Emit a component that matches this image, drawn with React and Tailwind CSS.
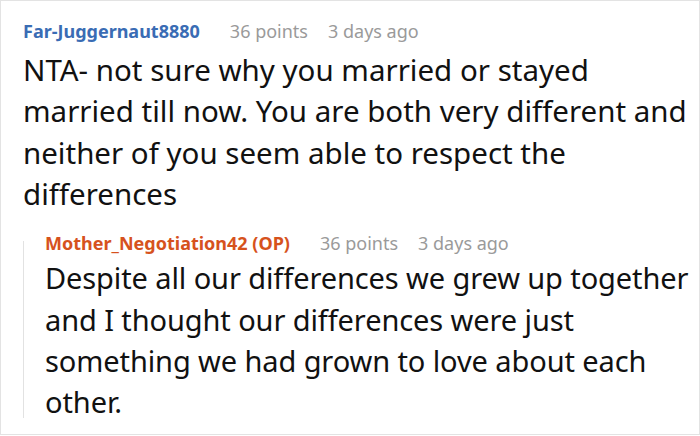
export default function App() {
  return (
    <div className="w-[700px] h-[436px] bg-white font-['Noto_Sans',sans-serif] overflow-hidden">
      <div className="h-[435px] border border-[#e3e3e3] pl-[22px] pt-[18px]">
        <div className="flex items-baseline text-[18px] leading-[24px]">
          <span className="font-bold text-[#3a6cb4]">Far-Juggernaut8880</span>
          <span className="ml-[30px] text-[#9a9a9a]">36 points</span>
          <span className="ml-[20px] text-[#9a9a9a]">3 days ago</span>
        </div>
        <p className="mt-[6px] text-[29.5px] leading-[41.33px] text-[#111] w-[664px]">
          NTA- not sure why you married or stayed married till now. You are both very different and neither of you seem able to respect the differences
        </p>
        <div className="mt-[17px] flex">
          <div className="w-px bg-[#e2e2e2] mt-[10px] mb-[4.5px] shrink-0" />
          <div className="pl-[21px]">
            <div className="flex items-baseline text-[18px] leading-[24px]">
              <span className="font-bold text-[#d6521d]">Mother_Negotiation42 (OP)</span>
              <span className="ml-[30px] text-[#9a9a9a]">36 points</span>
              <span className="ml-[20px] text-[#9a9a9a]">3 days ago</span>
            </div>
            <p className="mt-[2px] text-[29px] leading-[41.33px] text-[#111] tracking-[-0.1px] whitespace-nowrap">
              Despite all our differences we grew up together
              <br />
              and I thought our differences were just
              <br />
              something we had grown to love about each
              <br />
              other.
            </p>
          </div>
        </div>
      </div>
    </div>
  );
}
